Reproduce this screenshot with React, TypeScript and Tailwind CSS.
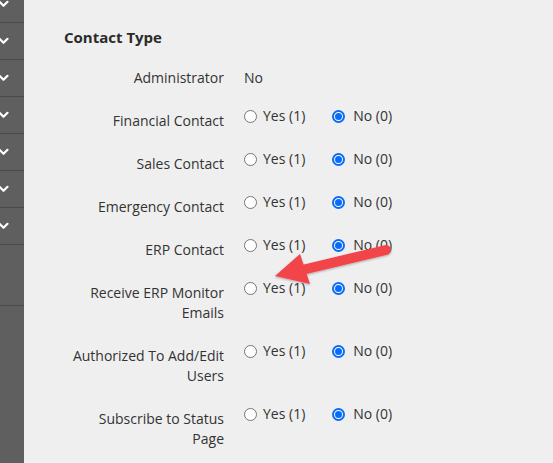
import React from "react";

const rows = [
  "Financial Contact",
  "Sales Contact",
  "Emergency Contact",
  "ERP Contact",
  "Receive ERP Monitor Emails",
  "Authorized To Add/Edit Users",
  "Subscribe to Status Page",
];

function Radio({ checked }: { checked?: boolean }) {
  if (checked) {
    return (
      <span className="w-[13px] h-[13px] rounded-full border-2 border-[#0a6cf5] bg-white flex items-center justify-center shrink-0">
        <span className="w-[7px] h-[7px] rounded-full bg-[#0a6cf5]" />
      </span>
    );
  }
  return <span className="w-[13px] h-[13px] rounded-full border border-[#767676] bg-white shrink-0" />;
}

function Chevron() {
  return (
    <svg width="12" height="8" viewBox="0 0 12 8" className="absolute left-[-2px] top-1/2 -translate-y-1/2">
      <path d="M1.5 1.8 L5.5 5.8 L9.5 1.8" fill="none" stroke="#ffffff" strokeWidth="2.2" strokeLinecap="round" strokeLinejoin="round" />
    </svg>
  );
}

export default function App() {
  return (
    <div
      className="relative w-[553px] h-[463px] overflow-hidden bg-[#efefef] flex text-[#333333]"
      style={{ fontFamily: '"Open Sans", "Liberation Sans", sans-serif' }}
    >
      <div className="w-[24px] shrink-0 bg-[#5f5f5f] flex flex-col">
        <div className="mt-[-14px]" />
        {Array.from({ length: 7 }).map((_, i) => (
          <div key={i} className="relative h-[37px] border-b border-[#4a4a4a] shrink-0">
            <Chevron />
          </div>
        ))}
        <div className="h-[61px] border-b border-[#4a4a4a] shrink-0" />
      </div>

      <div className="flex-1 pl-[40px] pt-[27px]">
        <h2 className="text-[15px] leading-[20px] font-bold text-[#2b2b2b]">Contact Type</h2>
        <div className="mt-[16px] flex flex-col gap-[18px] text-[14px]">
          <div className="flex">
            <div className="w-[160px] text-right leading-[20px] pt-[5px]">Administrator</div>
            <div className="ml-[20px] leading-[20px] pt-[5px]">No</div>
          </div>
          {rows.map((r) => (
            <div key={r} className="flex">
              <div className="w-[160px] text-right leading-[20px] pt-[5px]">{r}</div>
              <div className="ml-[20px] flex items-start leading-[20px] h-[20px]">
                <div className="flex items-center gap-[6px] h-[20px]">
                  <Radio />
                  <span>Yes (1)</span>
                </div>
                <div className="flex items-center gap-[8px] h-[20px] ml-[27px]">
                  <Radio checked />
                  <span>No (0)</span>
                </div>
              </div>
            </div>
          ))}
        </div>
      </div>

      <svg
        width="553"
        height="463"
        viewBox="0 0 553 463"
        className="absolute left-0 top-0 pointer-events-none"
      >
        <defs>
          <filter id="sh" x="-10%" y="-30%" width="120%" height="160%">
            <feDropShadow dx="0" dy="1" stdDeviation="1.2" floodColor="#000" floodOpacity="0.3" />
          </filter>
        </defs>
        <g filter="url(#sh)" fill="#f2444a" stroke="none">
          <line x1="302" y1="270" x2="386" y2="250" stroke="#f2444a" strokeWidth="10" strokeLinecap="round" />
          <polygon points="275,276 300,254 310,284" />
        </g>
      </svg>
    </div>
  );
}
